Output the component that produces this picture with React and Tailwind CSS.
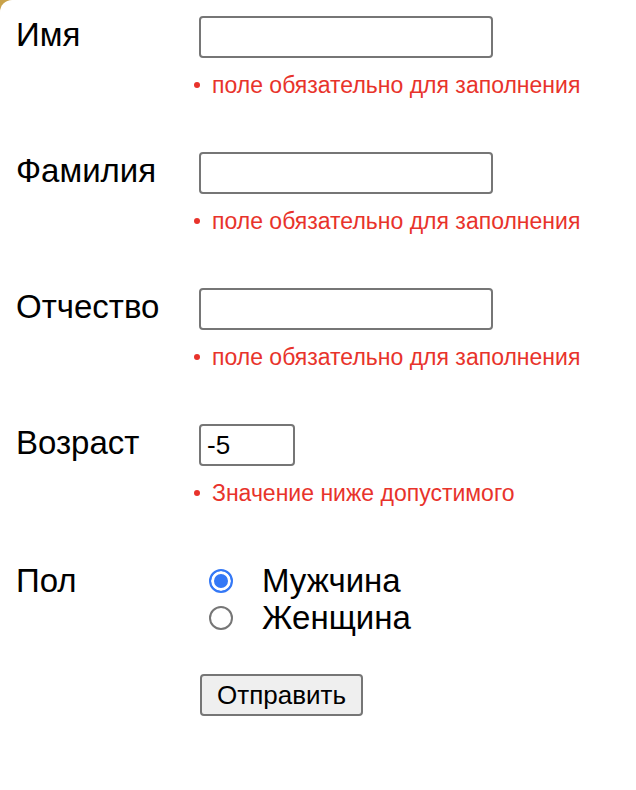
import { useState } from "react";

const font = { fontFamily: '"Liberation Sans", Arial, sans-serif' };

function Field({ label, value, width = "w-[294px]", error }) {
  return (
    <div className="flex">
      <label className="w-[183px] shrink-0 text-[33px] leading-[38px] text-black">{label}</label>
      <div className="flex flex-col">
        <input
          type="text"
          defaultValue={value}
          className={`${width} h-[42px] rounded-[4px] border-2 border-[#767676] bg-white px-[6px] text-[26px] text-black outline-none`}
        />
        <ul className="mt-[15px] ml-[-5px] flex items-center gap-[12px] text-[23px] leading-[24px] text-[#e8332b]">
          <li className="h-[6px] w-[6px] rounded-full bg-[#e8332b]" />
          <li>{error}</li>
        </ul>
      </div>
    </div>
  );
}

export default function App() {
  const [sex, setSex] = useState("m");

  return (
    <div className="min-h-screen bg-[#c9a24a]" style={font}>
      <div className="flex min-h-screen flex-col gap-[55px] rounded-tl-[12px] bg-white pt-[16px] pl-[16px]">
        <Field label="Имя" error="поле обязательно для заполнения" />
        <Field label="Фамилия" error="поле обязательно для заполнения" />
        <Field label="Отчество" error="поле обязательно для заполнения" />
        <Field label="Возраст" value="-5" width="w-[96px]" error="Значение ниже допустимого" />

        <div className="mt-[2px] flex">
          <span className="w-[184px] shrink-0 text-[33px] leading-[38px] text-black">Пол</span>
          <div className="flex flex-col">
            {[
              ["m", "Мужчина"],
              ["f", "Женщина"],
            ].map(([v, text]) => (
              <label key={v} className="flex h-[37px] items-center gap-[29px] pl-[9px] text-[33px] text-black">
                <input
                  type="radio"
                  name="sex"
                  checked={sex === v}
                  onChange={() => setSex(v)}
                  className="h-[24px] w-[24px] appearance-none rounded-full border-2 border-[#767676] bg-white checked:border-[#3478f6] checked:bg-[#3478f6] checked:shadow-[inset_0_0_0_3px_white]"
                />
                {text}
              </label>
            ))}
            <button
              type="button"
              className="mt-[38px] h-[42px] w-[163px] rounded-[4px] border-2 border-[#767676] bg-[#efefef] text-[26px] text-black"
            >
              Отправить
            </button>
          </div>
        </div>
      </div>
    </div>
  );
}
